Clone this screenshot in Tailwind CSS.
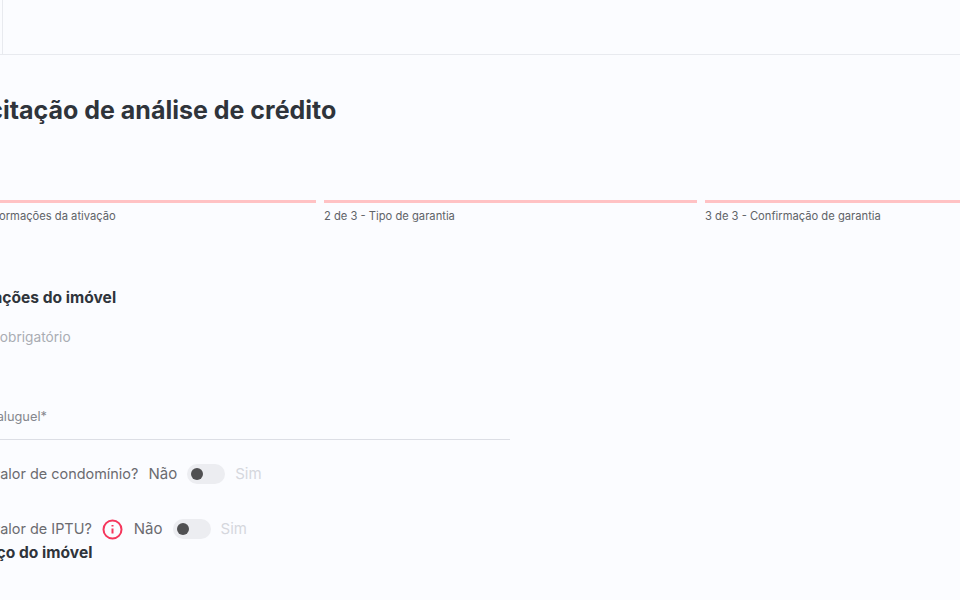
<!DOCTYPE html>
<html lang="pt-BR">
<head>
    <meta charset="UTF-8">
    <meta name="viewport" content="width=device-width, initial-scale=1.0">
    <title>Solicitação de análise de crédito</title>
    <script src="https://cdn.jsdelivr.net/npm/@tailwindcss/browser@4"></script>
</head>
<body class="bg-[#fbfcff] h-[600px] overflow-hidden font-['Inter',sans-serif]">
    <!-- Top bar -->
    <header class="h-[55px] border-b border-[#e8eaef] pl-[2px]">
        <div class="h-full w-px bg-[#e8eaef]"></div>
    </header>

    <main class="ml-[-57px] w-[1135px]">
        <h1 class="mt-[39px] h-[32px] text-[25px] leading-[32px] font-bold text-[#2f343b] whitespace-nowrap">Solicitação de análise de crédito</h1>

        <!-- Steps -->
        <div class="mt-[74px] grid grid-cols-3 gap-2">
            <div>
                <div class="h-[3px] bg-[#ffc2c4]"></div>
                <p class="mt-[5px] text-[11.2px] leading-[16px] text-[#5f6368]">1 de 3 - Informações da ativação</p>
            </div>
            <div>
                <div class="h-[3px] bg-[#ffc2c4]"></div>
                <p class="mt-[5px] text-[11.2px] leading-[16px] text-[#5f6368]">2 de 3 - Tipo de garantia</p>
            </div>
            <div>
                <div class="h-[3px] bg-[#ffc2c4]"></div>
                <p class="mt-[5px] text-[11.2px] leading-[16px] text-[#5f6368]">3 de 3 - Confirmação de garantia</p>
            </div>
        </div>

        <h2 class="mt-[64px] text-[15.6px] leading-[20px] font-bold text-[#2f343b]">Informações do imóvel</h2>
        <p class="mt-[19px] text-[13.7px] leading-[20px] text-[#a9acb3]">*Campo obrigatório</p>

        <!-- Rent field -->
        <div class="mt-[62px] w-[567px] h-[31px] border-b border-[#dcdee5] text-[12.8px] leading-[16px] text-[#85878d]">Valor do aluguel*</div>

        <div class="mt-[22px] flex items-center h-[24px] text-[14.45px] text-[#6b6b70]">
            <span>Possui valor de condomínio?</span>
            <span class="ml-[10px] text-[15px]">Não</span>
            <span class="ml-[10px] w-[38px] h-[20px] rounded-full bg-[#ecedf1] flex items-center pl-[4px] pb-px">
                <span class="w-[12px] h-[12px] rounded-full bg-[#505052]"></span>
            </span>
            <span class="ml-[10px] text-[15px] text-[#d5d7dd]">Sim</span>
        </div>

        <div class="mt-[31px] flex items-center h-[24px] text-[14.45px] text-[#6b6b70]">
            <span>Possui valor de IPTU?</span>
            <svg class="ml-[10px]" width="21" height="21" viewBox="0 0 21 21" fill="none" stroke="#f5365c" stroke-width="2">
                <circle cx="10.5" cy="10.5" r="9"></circle>
                <path d="M10.5 9.5v5M10.5 6v1.6"></path>
            </svg>
            <span class="ml-[11px] text-[15px]">Não</span>
            <span class="ml-[10px] w-[38px] h-[20px] rounded-full bg-[#ecedf1] flex items-center pl-[4px] pb-px">
                <span class="w-[12px] h-[12px] rounded-full bg-[#505052]"></span>
            </span>
            <span class="ml-[10px] text-[15px] text-[#d5d7dd]">Sim</span>
        </div>

        <h2 class="mt-[2px] text-[15.6px] leading-[20px] font-bold text-[#2f343b]">Endereço do imóvel</h2>
    </main>
</body>
</html>
